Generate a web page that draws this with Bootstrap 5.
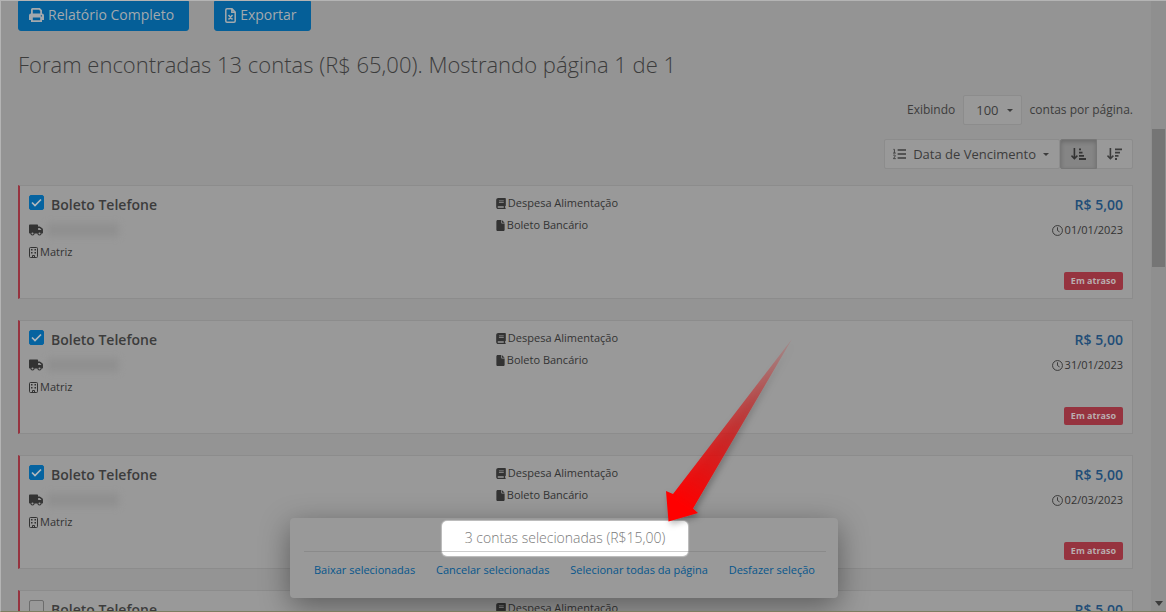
<!DOCTYPE html>
<html lang="pt-BR">
<head>
<meta charset="utf-8">
<meta name="viewport" content="width=device-width, initial-scale=1">
<title>Contas a pagar</title>
<link href="https://cdn.jsdelivr.net/npm/bootstrap@5.3.0/dist/css/bootstrap.min.css" rel="stylesheet">
<style>
  body { font-family: "Open Sans", "Noto Sans", sans-serif; font-size: 12px; line-height: 18px; color: #3c3c3c; background: #949494; }
  .app { height: 100vh; border-top: 1px solid #b4b4b4; border-left: 1px solid #b4b4b4; border-bottom: 1px solid #7d7d62; }
  .page-area { padding: 0 18px 0 17px; }
  svg { display: block; flex: none; fill: currentColor; }
  .toolbar { gap: 25px; }
  .btn-main { --bs-btn-color: #a3a9ad; --bs-btn-bg: #055f98; --bs-btn-border-color: #055f98; --bs-btn-font-size: 14px; --bs-btn-line-height: 22px; --bs-btn-border-radius: 0 0 3px 3px; padding: 2px 14px 4px 10px; gap: 4px; }
  .result-title { font-size: 22px; line-height: 30px; font-weight: 300; margin: 18px 0 16px; }
  .sort-row { margin: 14px 0 16px; }
  .btn-soft { --bs-btn-color: #3c3c3c; --bs-btn-bg: #999; --bs-btn-border-color: #8c8c8c; --bs-btn-font-size: 13px; --bs-btn-line-height: 20px; --bs-btn-padding-y: 4px; --bs-btn-border-radius: 2px; --bs-btn-active-color: #333; --bs-btn-active-bg: #858585; --bs-btn-active-border-color: #777; }
  .btn-soft.active { box-shadow: inset 0 2px 4px rgba(0,0,0,.2); }
  .btn-sort { gap: 7px; padding-left: 8px; padding-right: 10px; }
  .btn-dir { padding-left: 10px; padding-right: 10px; }
  .caret { border: 3px solid transparent; border-top-color: currentColor; border-bottom: 0; }
  .bill { min-height: 114px; padding: 8px 9px; margin-bottom: 21px; background: #999; border: 1px solid #8c8c8c; border-left: 2px solid #96333f; border-radius: 0; color: #333; flex: none; font-size: 11px; }
  .bill .form-check-input { width: 15px; height: 15px; margin: 1px 0 0; border: 1px solid #6c6c6c; border-radius: 2px; background-color: #999; flex: none; }
  .bill .form-check-input:checked { background-color: #0563a0; border-color: #0563a0; background-image: url("data:image/svg+xml,%3csvg xmlns='http://www.w3.org/2000/svg' viewBox='0 0 15 15'%3e%3cpath fill='none' stroke='%23b0b8bd' stroke-width='1.7' d='M3 7.5l3 3 6-6'/%3e%3c/svg%3e"); background-size: 15px; }
  .bill-head { gap: 7px; margin-bottom: 5px; }
  .bill-line { display: flex; align-items: center; gap: 2px; min-height: 18px; margin-bottom: 4px; }
  .bill-name { font-size: 14px; line-height: 22px; font-weight: 600; color: #3c3c3c; }
  .bill-kind { padding-left: 11px; }
  .amount { font-size: 14px; line-height: 22px; font-weight: 600; color: #214d77; margin-bottom: 5px; }
  .status { --bs-badge-font-size: 9px; --bs-badge-padding-x: 7px; --bs-badge-padding-y: 4px; --bs-badge-font-weight: 700; --bs-badge-border-radius: 2px; line-height: 10px; background: #96333f; color: #b9adaf; }
  .redacted { width: 72px; height: 14px; background: #909090; filter: blur(3px); border-radius: 4px; margin-left: 2px; }
  .scroll-track { width: 15px; background: #8f8f8f; padding: 128px 0 5px; }
  .scroll-thumb { width: 13px; height: 138px; background: #757575; }
  .selection { left: 289px; bottom: 13px; width: 548px; height: 80px; padding: 3px 12px 0 14px; background: #999; border-radius: 4px; box-shadow: 0 8px 30px rgba(0,0,0,.4); }
  .selected-count { width: 246px; height: 35px; margin: 0 auto; border-radius: 5px; background: #fff; color: #7a7a7a; font-size: 14px; line-height: 34px; font-weight: 300; box-shadow: 0 0 1px 1px #c0c0c0; }
  .selection hr { margin: -5px 0 9px; border-color: #707070; opacity: .35; position: relative; }
  .selection nav { padding: 0 11px 0 10px; }
  .selection a { color: #06568c; font-size: 11px; text-decoration: none; }
  .pointer-arrow { left: 639px; top: 330px; z-index: 5; pointer-events: none; }
</style>
</head>
<body>
<svg width="0" height="0" class="position-absolute" aria-hidden="true">
  <symbol id="truck" viewBox="0 0 640 512"><path d="M48 0C21.500 0 0 21.500 0 48v320c0 26.500 21.500 48 48 48h16a96 96 0 0 0 192 0h128a96 96 0 0 0 192 0h32a32 32 0 0 0 32-32V237c0-17-7-33-19-45L530 114a64 64 0 0 0-45-18h-69V48c0-26-21-48-48-48zm368 160h69l75 77v19H416zM160 368a48 48 0 1 1 0 96 48 48 0 0 1 0-96zm320 0a48 48 0 1 1 0 96 48 48 0 0 1 0-96z"/></symbol>
  <symbol id="building" viewBox="0 0 9 11"><path fill="none" stroke="currentColor" d="M1.500.5h6q1 0 1 1v8q0 1-1 1h-6q-1 0-1-1v-8q0-1 1-1zM3.500 10.500v-2h2v2"/><path d="M2 2h1.500v1.500H2zm3.500 0H7v1.500H5.500zM2 5h1.500v1.500H2zm3.500 0H7v1.500H5.500z"/></symbol>
  <symbol id="book" viewBox="0 0 448 512"><path fill-rule="evenodd" d="M96 0C43 0 0 43 0 96v320c0 53 43 96 96 96h320a32 32 0 0 0 0-64v-64a32 32 0 0 0 32-32V32a32 32 0 0 0-32-32zm0 384h256v64H96a32 32 0 0 1 0-64zm32-264h224v36H128zm0 72h224v36H128z"/></symbol>
  <symbol id="file" viewBox="0 0 384 512"><path d="M0 64C0 29 29 0 64 0h160v128a32 32 0 0 0 32 32h128v288c0 35-29 64-64 64H64c-35 0-64-29-64-64zM384 128H256V0z"/></symbol>
  <symbol id="clock" viewBox="0 0 12 12"><path fill="none" stroke="currentColor" d="M6 .6a5.400 5.400 0 1 0 0 10.800A5.400 5.400 0 0 0 6 .6zM6 2.500V6l2.300 1.600"/></symbol>
  <symbol id="asc" viewBox="0 0 15 13"><path d="M2.600 0h1.600v8.800l1.700-1.700 1 1.100L3.400 11.700 0 8.200l1-1.100 1.600 1.700zM8 .5h2v1.800H8zm0 3.200h3.500v1.800H8zm0 3.200h5v1.800H8zm0 3.200h7v1.800H8z"/></symbol>
  <symbol id="desc" viewBox="0 0 15 13"><path d="M2.600 0h1.600v8.800l1.700-1.700 1 1.100L3.400 11.700 0 8.200l1-1.100 1.600 1.700zM8 .5h7v1.800H8zm0 3.200h5v1.800H8zm0 3.200h3.500v1.800H8zm0 3.200h2v1.800H8z"/></symbol>
</svg>
<div class="app d-flex overflow-hidden position-relative">
  <main class="page-area flex-grow-1 d-flex flex-column overflow-hidden">
    <div class="toolbar d-flex">
      <button type="button" class="btn btn-main d-flex align-items-center">
        <svg width="15" height="14" viewBox="0 0 15 14"><path fill-rule="evenodd" d="M3.500 0h7.300L13 2.200V5.500q2 0 2 2V12h-2v2H2v-2H0V7.500q0-2 2-2V1.500Q2 0 3.500 0zm.3 1.800v3.700h7.400V3L10 1.800zM3.800 9.500v2.700h7.400V9.500zm8-2.200v1.200H13V7.300z"/></svg>
        Relatório Completo
      </button>
      <button type="button" class="btn btn-main d-flex align-items-center">
        <svg width="11" height="15" viewBox="0 0 11 15"><path fill="none" stroke="currentColor" stroke-width="1.500" d="M2 .8h5l3.200 3.300V13q0 1.200-1.200 1.200H2Q.8 14.200.8 13V2Q.8.800 2 .8zM6.800.8v3.500h3.400M3.500 6.900l4 4.700m0-4.700l-4 4.700"/></svg>
        Exportar
      </button>
    </div>
    <h1 class="result-title">Foram encontradas 13 contas (R$ 65,00). Mostrando página 1 de 1</h1>
    <div class="d-flex justify-content-end align-items-center">
      <span id="per-label">Exibindo</span>
      <button type="button" class="btn btn-soft d-flex align-items-center gap-2 mx-2 px-2" aria-labelledby="per-label"><span class="ms-1">100</span><span class="caret"></span></button>
      <span>contas por página.</span>
    </div>
    <div class="sort-row d-flex justify-content-end">
      <button type="button" class="btn btn-soft btn-sort d-flex align-items-center">
        <svg width="13" height="12" viewBox="0 0 14 12"><path d="M5 1h9v1.500H5zm0 4.200h9v1.500H5zm0 4.300h9V11H5z"/><path fill="none" stroke="currentColor" d="M.5 1h1v4M0 5h3M.3 7.300Q2.500 6.500 2.500 8L.5 11H3"/></svg>
        <span>Data de Vencimento</span><span class="caret"></span>
      </button>
      <div class="btn-group">
        <button type="button" class="btn btn-soft btn-dir active d-flex align-items-center" aria-label="Ordem crescente"><svg width="15" height="13"><use href="#asc"/></svg></button>
        <button type="button" class="btn btn-soft btn-dir d-flex align-items-center" aria-label="Ordem decrescente"><svg width="15" height="13"><use href="#desc"/></svg></button>
      </div>
    </div>
    <section id="bills" class="d-flex flex-column"></section>
  </main>
  <div class="scroll-track flex-shrink-0 d-flex flex-column align-items-center justify-content-between" aria-hidden="true">
    <div class="scroll-thumb"></div>
    <svg width="8" height="5" viewBox="0 0 8 5"><path d="M0 0h8L4 5z"/></svg>
  </div>
  <div class="selection position-absolute">
    <div class="selected-count text-center">3 contas selecionadas (R$15,00)</div>
    <hr>
    <nav class="d-flex justify-content-between" aria-label="Ações da seleção">
      <a href="#">Baixar selecionadas</a><a href="#">Cancelar selecionadas</a><a href="#">Selecionar todas da página</a><a href="#">Desfazer seleção</a>
    </nav>
  </div>
  <svg class="pointer-arrow position-absolute" width="170" height="205" viewBox="640 331 170 205" aria-hidden="true">
    <defs><linearGradient id="fade" gradientUnits="userSpaceOnUse" x1="792" y1="340" x2="682" y2="505"><stop offset="0" stop-color="#e00000" stop-opacity=".1"/><stop offset=".4" stop-color="#d80000" stop-opacity=".5"/><stop offset="1" stop-color="#f00"/></linearGradient>
    <filter id="shade" x="-20%" y="-10%" width="140%" height="125%"><feDropShadow dx="2" dy="3" stdDeviation="3" flood-opacity=".3"/></filter></defs>
    <path filter="url(#shade)" fill="url(#fade)" d="M792 339L693 508.500L698 513L668.500 521.500L666 491L673 494z"/>
  </svg>
</div>
<script>
  const bills = [["01/01/2023", true], ["31/01/2023", true], ["02/03/2023", true], ["01/04/2023", false]];
  document.getElementById("bills").innerHTML = bills.map(([date, on], i) => `
    <article class="card bill">
      <div class="row g-0 flex-grow-1">
        <div class="col-5">
          <div class="bill-head d-flex align-items-start">
            <input class="form-check-input" type="checkbox" id="bill${i}" ${on ? "checked" : ""}>
            <label class="bill-name" for="bill${i}">Boleto Telefone</label>
          </div>
          <div class="bill-line"><svg width="14" height="12"><use href="#truck"/></svg><span class="redacted"></span></div>
          <div class="bill-line"><svg width="9" height="11"><use href="#building"/></svg>Matriz</div>
        </div>
        <div class="col-5 bill-kind">
          <div class="bill-line"><svg width="10" height="11"><use href="#book"/></svg>Despesa Alimentação</div>
          <div class="bill-line"><svg width="9" height="11"><use href="#file"/></svg>Boleto Bancário</div>
        </div>
        <div class="col-2 d-flex flex-column align-items-end">
          <div class="amount">R$ 5,00</div>
          <div class="bill-line"><svg width="11" height="11"><use href="#clock"/></svg>${date}</div>
          <span class="badge status mt-auto">Em atraso</span>
        </div>
      </div>
    </article>`).join("");
</script>
<script src="https://cdn.jsdelivr.net/npm/bootstrap@5.3.0/dist/js/bootstrap.bundle.min.js"></script>
</body>
</html>
